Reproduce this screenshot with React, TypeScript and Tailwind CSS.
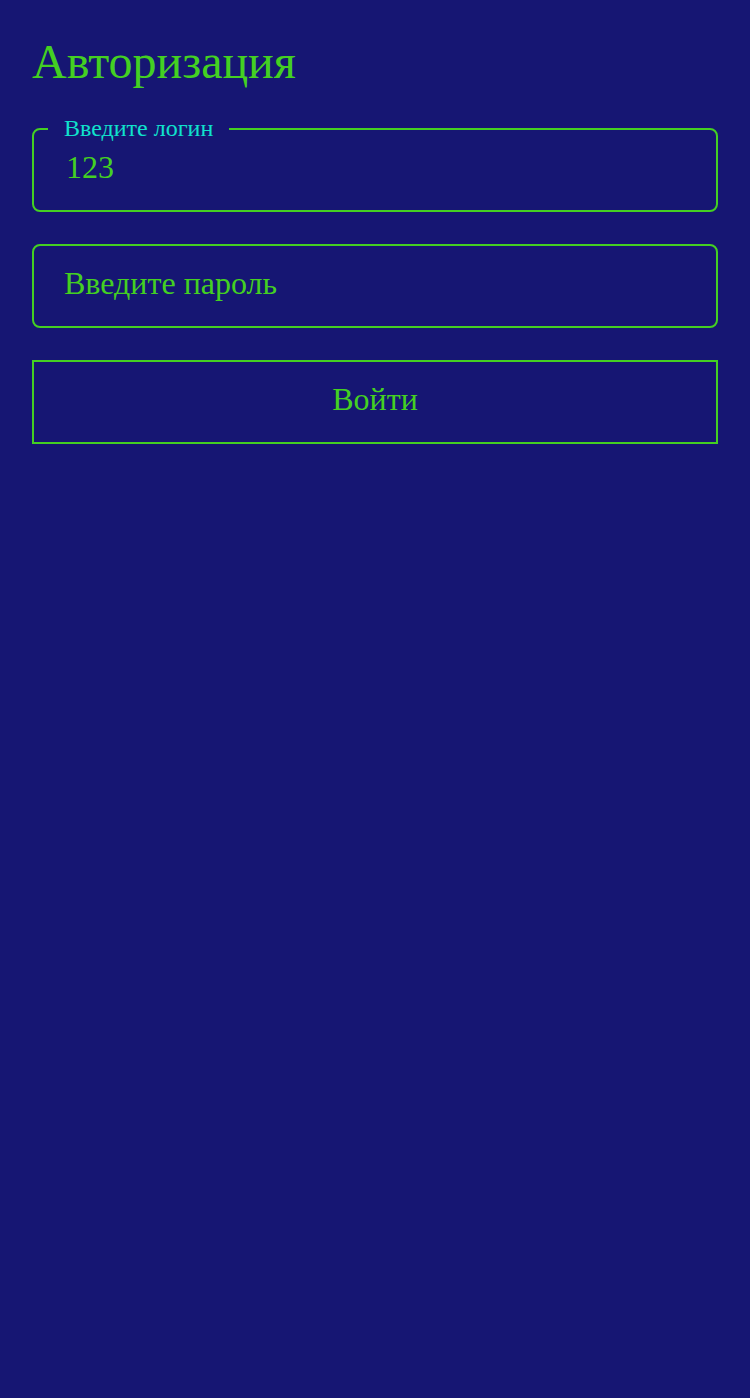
import { useState } from "react";

export default function App() {
  const [login, setLogin] = useState("123");
  const [password, setPassword] = useState("");

  return (
    <div
      className="min-h-[1398px] w-full bg-[#161673] px-8 pt-[30px]"
      style={{ fontFamily: '"Liberation Serif", serif' }}
    >
      <h1 className="text-[48px] leading-[64px] text-[#44d022]">Авторизация</h1>

      <form className="mt-[34px] flex flex-col gap-8" onSubmit={(e) => e.preventDefault()}>
        <div className="relative h-[84px] rounded-lg border-2 border-[#44d022]">
          <span className="absolute -top-[16px] left-[14px] bg-[#161673] px-4 text-[24px] leading-[28px] text-[#10e2cc]">
            Введите логин
          </span>
          <input
            value={login}
            onChange={(e) => setLogin(e.target.value)}
            className="h-full w-full bg-transparent pb-[6px] pl-8 pr-4 text-[32px] text-[#44d022] outline-none"
          />
        </div>

        <div className="h-[84px] rounded-lg border-2 border-[#44d022]">
          <input
            type="password"
            value={password}
            onChange={(e) => setPassword(e.target.value)}
            placeholder="Введите пароль"
            className="h-full w-full bg-transparent pb-[6px] pl-[30px] pr-4 text-[32px] text-[#44d022] outline-none placeholder:text-[#44d022]"
          />
        </div>

        <button
          type="submit"
          className="h-[84px] w-full border-2 border-[#44d022] pb-[6px] text-[32px] text-[#44d022]"
        >
          Войти
        </button>
      </form>
    </div>
  );
}
